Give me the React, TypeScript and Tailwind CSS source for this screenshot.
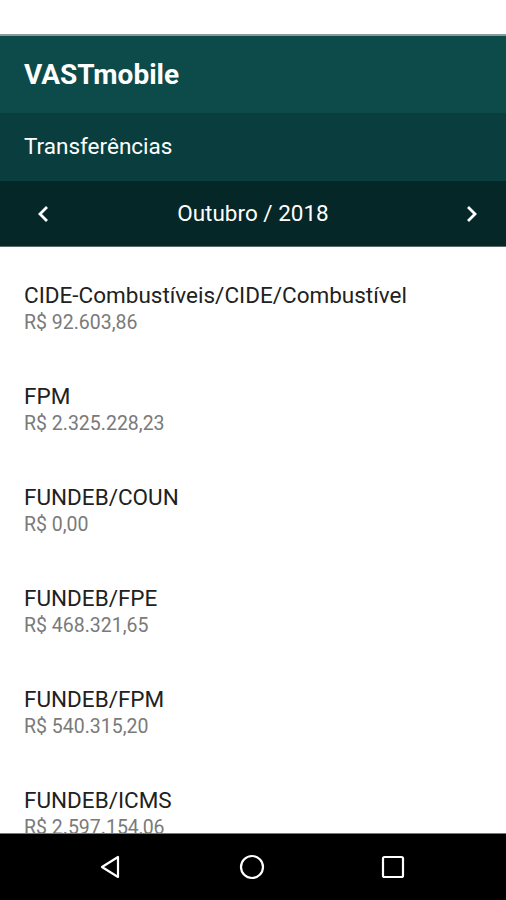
import React from "react";

const items = [
  { name: "CIDE-Combustíveis/CIDE/Combustível", value: "R$ 92.603,86" },
  { name: "FPM", value: "R$ 2.325.228,23" },
  { name: "FUNDEB/COUN", value: "R$ 0,00" },
  { name: "FUNDEB/FPE", value: "R$ 468.321,65" },
  { name: "FUNDEB/FPM", value: "R$ 540.315,20" },
  { name: "FUNDEB/ICMS", value: "R$ 2.597.154,06" },
];

export default function App() {
  return (
    <div
      className="w-[506px] h-[900px] flex flex-col overflow-hidden bg-white"
      style={{ fontFamily: "Roboto, 'Noto Sans', sans-serif" }}
    >
      <div className="h-[34px] bg-white shrink-0" />
      <div className="h-[79px] shrink-0 bg-[#0d4b4b] border-t-2 border-[#8a9a9a] flex items-center px-6">
        <span className="text-white text-[28px] font-bold">VASTmobile</span>
      </div>
      <div className="h-[68px] shrink-0 bg-[#0a3e3e] flex items-center px-6">
        <span className="text-white text-[22.5px]">Transferências</span>
      </div>
      <div className="h-[66px] shrink-0 bg-[#062727] grid grid-cols-[1fr_auto_1fr] items-center border-b border-[#5a6a6a]">
        <svg width="18" height="18" viewBox="0 0 18 18" className="justify-self-start ml-[34px]">
          <path d="M12 3 L6 9 L12 15" stroke="white" strokeWidth="2.8" fill="none" strokeLinecap="square" />
        </svg>
        <span className="text-white text-[22.5px]">Outubro / 2018</span>
        <svg width="18" height="18" viewBox="0 0 18 18" className="justify-self-end mr-[25px]">
          <path d="M6 3 L12 9 L6 15" stroke="white" strokeWidth="2.8" fill="none" strokeLinecap="square" />
        </svg>
      </div>
      <div className="flex-1 overflow-hidden pt-[35px] px-6 flex flex-col gap-[49px]">
        {items.map((it) => (
          <div key={it.name} className="flex flex-col gap-[4px]">
            <span className="text-[22.5px] leading-[26px] text-[#212121]">{it.name}</span>
            <span className="text-[19.5px] leading-[22px] text-[#7a7a7a]">{it.value}</span>
          </div>
        ))}
      </div>
      <div className="h-[67px] shrink-0 bg-black flex items-center justify-center gap-[115px] border-t border-[#777] pr-[3px]">
        <svg width="26" height="26" viewBox="0 0 26 26">
          <path d="M20 3 L20 23 L4 13 Z" stroke="white" strokeWidth="2.2" fill="none" strokeLinejoin="round" />
        </svg>
        <svg width="26" height="26" viewBox="0 0 26 26">
          <circle cx="13" cy="13" r="11" stroke="white" strokeWidth="2.2" fill="none" />
        </svg>
        <svg width="26" height="26" viewBox="0 0 26 26">
          <rect x="3" y="3" width="20" height="20" rx="1.5" stroke="white" strokeWidth="2.2" fill="none" />
        </svg>
      </div>
    </div>
  );
}
